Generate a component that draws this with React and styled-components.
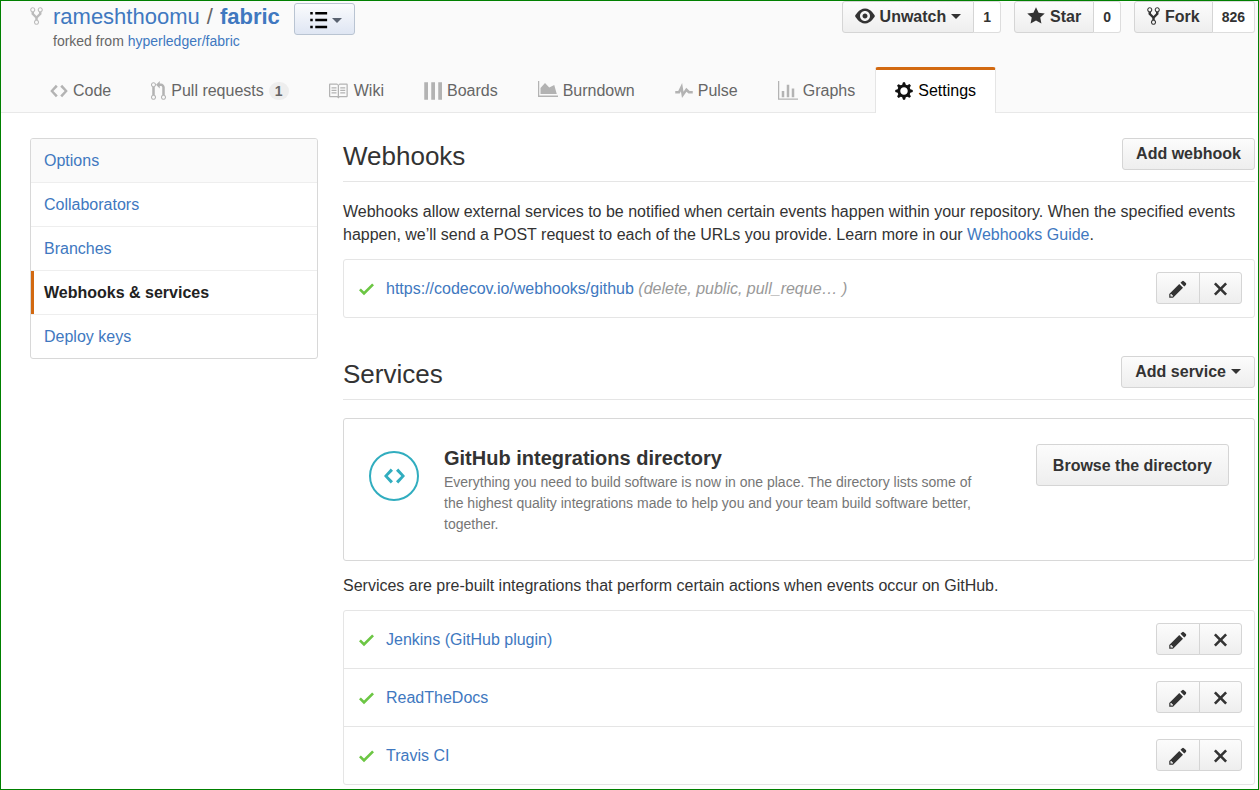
import React from "react";
import styled, { createGlobalStyle, css } from "styled-components";

const GlobalStyle = createGlobalStyle`
  *, *::before, *::after { box-sizing: border-box; }
  body {
    margin: 0;
    background: #fff;
    color: #333;
    font: 16px/23px "Liberation Sans", Arial, sans-serif;
  }
  h1, h2, h3, p, ul { margin: 0; padding: 0; }
  ul { list-style: none; }
  svg { display: block; flex: none; }
`;

const icons = {
  fork: {
    width: 10,
    d: "M8 1a1.993 1.993 0 0 0-1 3.72V6L5 8 3 6V4.72A1.993 1.993 0 0 0 2 1a1.993 1.993 0 0 0-1 3.72V6.5l3 3v1.78A1.993 1.993 0 0 0 5 15a1.993 1.993 0 0 0 1-3.72V9.5l3-3V4.72A1.993 1.993 0 0 0 8 1zM2 4.2C1.34 4.2.8 3.65.8 3c0-.65.55-1.2 1.2-1.2.65 0 1.2.55 1.2 1.2 0 .65-.55 1.2-1.2 1.2zm3 10c-.66 0-1.2-.55-1.2-1.2 0-.65.55-1.2 1.2-1.2.65 0 1.2.55 1.2 1.2 0 .65-.55 1.2-1.2 1.2zm3-10c-.66 0-1.2-.55-1.2-1.2 0-.65.55-1.2 1.2-1.2.65 0 1.2.55 1.2 1.2 0 .65-.55 1.2-1.2 1.2z",
  },
  eye: {
    width: 16,
    d: "M8.06 2C3 2 0 8 0 8s3 6 8.06 6C13 14 16 8 16 8s-3-6-7.94-6zM8 12c-2.2 0-4-1.78-4-4 0-2.2 1.8-4 4-4 2.22 0 4 1.8 4 4 0 2.22-1.78 4-4 4zm2-4c0 1.11-.89 2-2 2-1.11 0-2-.89-2-2 0-1.11.89-2 2-2 1.11 0 2 .89 2 2z",
  },
  star: {
    width: 14,
    d: "M14 6l-4.9-.64L7 1 4.9 5.36 0 6l3.6 3.26L2.67 14 7 11.67 11.33 14l-.93-4.74z",
  },
  code: {
    width: 14,
    d: "M9.5 3L8 4.5 11.5 8 8 11.5 9.5 13 14 8 9.5 3zm-5 0L0 8l4.5 5L6 11.5 2.5 8 6 4.5 4.5 3z",
  },
  pull: {
    width: 12,
    d: "M11 11.28V5c-.03-.78-.34-1.47-.94-2.06C9.46 2.35 8.78 2.03 8 2H7V0L4 3l3 3V4h1c.27.02.48.11.69.31.21.2.3.42.31.69v6.28A1.993 1.993 0 0 0 10 15a1.993 1.993 0 0 0 1-3.72zm-1 2.92c-.66 0-1.2-.55-1.2-1.2 0-.65.55-1.2 1.2-1.2.65 0 1.2.55 1.2 1.2 0 .65-.55 1.2-1.2 1.2zM4 3c0-1.11-.89-2-2-2a1.993 1.993 0 0 0-1 3.72v6.56A1.993 1.993 0 0 0 2 15a1.993 1.993 0 0 0 1-3.72V4.72c.59-.34 1-.98 1-1.72zm-.8 10c0 .66-.55 1.2-1.2 1.2-.65 0-1.2-.55-1.2-1.2 0-.65.55-1.2 1.2-1.2.65 0 1.2.55 1.2 1.2zM2 4.2C1.34 4.2.8 3.65.8 3c0-.65.55-1.2 1.2-1.2.65 0 1.2.55 1.2 1.2 0 .65-.55 1.2-1.2 1.2z",
  },
  book: {
    width: 16,
    d: "M2 5h4v1H2V5zm0 3h4V7H2v1zm0 2h4V9H2v1zm11-5H9v1h4V5zm0 2H9v1h4V7zm0 2H9v1h4V9zm2-6v9c0 .55-.45 1-1 1H8.5l-1 1-1-1H1c-.55 0-1-.45-1-1V3c0-.55.45-1 1-1h5.500l1 1 1-1H14c.55 0 1 .45 1 1zm-8 .5L6.500 3H1v9h6V3.5zm7-.5H8.500l-.5.5V12h6V3z",
  },
  boards: { width: 14, d: "M0 1h3v14H0zM5.600 1h3v14h-3zM11.200 1h3v14h-3z" },
  burndown: {
    width: 16,
    d: "M0 0h1v11.600h15v1.200H0zM2 10.400V5.500L5.600 1.500 9 5.200 13 3.200 15 10.400z",
  },
  pulse: {
    width: 14,
    d: "M11.5 8L8.8 5.4 6.6 8.5 5.5 1.6 2.38 8H0v2h3.6l.9-1.8.9 5.4L9 8.500l1.6 1.5H14V8z",
  },
  graph: { width: 16, d: "M16 14v1H0V0h1v14h15zM5 13H3V8h2v5zm4 0H7V3h2v10zm4 0h-2V6h2v7z" },
  gear: {
    width: 14,
    d: "M14 8.77v-1.6l-1.94-.64-.45-1.09.88-1.84-1.13-1.13-1.81.91-1.09-.45-.69-1.92h-1.6l-.63 1.94-1.11.45-1.84-.88-1.13 1.13.91 1.81-.45 1.09L0 7.23v1.59l1.94.64.45 1.09-.88 1.84 1.13 1.13 1.81-.91 1.09.45.69 1.92h1.59l.63-1.94 1.11-.45 1.84.88 1.13-1.13-.92-1.81.47-1.09L14 8.75v.02zM7 11c-1.66 0-3-1.34-3-3s1.34-3 3-3 3 1.34 3 3-1.34 3-3 3z",
  },
  check: { width: 12, d: "M12 5l-8 8-4-4 1.5-1.5L4 10l6.5-6.5z" },
  pencil: {
    width: 14,
    d: "M0 12v3h3l8-8-3-3-8 8zm3 2H1v-2h1v1h1v1zm10.3-9.3L12 6 9 3l1.3-1.3a.996.996 0 0 1 1.41 0l1.59 1.59c.39.39.39 1.02 0 1.41z",
  },
  remove: {
    width: 12,
    d: "M7.48 8l3.75 3.75-1.48 1.48L6 9.48l-3.75 3.75-1.48-1.48L4.52 8 .77 4.25l1.48-1.48L6 6.52l3.75-3.75 1.48 1.48z",
  },
  list: {
    width: 14,
    d: "M0 1.500h2v2H0zM4 1.500h9.500v2H4zM0 7h2v2H0zM4 7h9.500v2H4zM0 12.500h2v2H0zM4 12.500h9.500v2H4z",
  },
};

function Icon({ name, size = 20 }) {
  const { width, d } = icons[name];
  return (
    <svg
      width={Math.round((width * size) / 16)}
      height={size}
      viewBox={`0 0 ${width} 16`}
      fill="currentColor"
      fillRule="evenodd"
      aria-hidden="true"
    >
      <path d={d} />
    </svg>
  );
}

const Frame = styled.div`
  min-height: 100vh;
  border: 1px solid #008000;
`;

const Link = styled.a`
  color: #4078c0;
  text-decoration: none;
`;

const Caret = styled.span`
  flex: none;
  border: 5px solid transparent;
  border-top-color: currentColor;
  border-bottom: 0;
`;

const Button = styled.button`
  display: inline-flex;
  align-items: center;
  justify-content: center;
  gap: 5px;
  flex: none;
  min-height: ${(p) => (p.$large ? "42px" : "32px")};
  padding: ${(p) => (p.$large ? "0 16px" : "0 13px 2px")};
  border: 1px solid #d5d5d5;
  border-radius: 3px;
  background: linear-gradient(#fcfcfc, #eee);
  color: #333;
  font: bold 16px/23px "Liberation Sans", Arial, sans-serif;
  white-space: nowrap;
  cursor: pointer;
`;

/* Header */

const Header = styled.header`
  padding: 0 3px 0 29px;
  border-bottom: 1px solid #e8e8e8;
  background: #fafafa;
`;

const HeaderTop = styled.div`
  display: flex;
  justify-content: space-between;
  align-items: flex-start;
  gap: 20px;
`;

const Title = styled.div`
  display: flex;
  align-items: flex-start;
  gap: 10px;
  padding-top: 2px;
`;

const TitleIcon = styled.span`
  padding-top: 3px;
  color: #bbb;
`;

const RepoName = styled.h1`
  display: flex;
  gap: 7px;
  color: #666;
  font-size: 22px;
  font-weight: normal;
  line-height: 28px;
`;

const RepoLink = styled(Link)`
  font-weight: bold;
`;

const ForkNote = styled.p`
  color: #666;
  font-size: 14px;
  line-height: 20px;
`;

const ListButton = styled(Button)`
  gap: 4px;
  margin-left: 4px;
  padding: 2px 12px 0 15px;
  border-color: #b9c4d2;
  background: linear-gradient(#fafbfd, #dfe6f3);
  color: #000;

  ${Caret} { color: #596270; }
`;

const Social = styled.ul`
  display: flex;
  gap: 13px;
`;

const SocialItem = styled.li`
  display: flex;
`;

const SocialButton = styled(Button)`
  padding: 0 12px 2px;
  border-radius: 3px 0 0 3px;
`;

const Count = styled.a`
  display: flex;
  align-items: center;
  padding: 0 9px;
  border: 1px solid #ddd;
  border-left: 0;
  border-radius: 0 3px 3px 0;
  background: #fff;
  color: #333;
  font-size: 14px;
  font-weight: bold;
  text-decoration: none;
`;

const Tabs = styled.nav`
  display: flex;
  margin-top: 16px;
`;

const Tab = styled.a`
  display: flex;
  align-items: center;
  gap: 5px;
  height: 46px;
  margin-bottom: -1px;
  padding: 0 19px 2px;
  border: solid transparent;
  border-width: 3px 1px 0;
  border-radius: 3px 3px 0 0;
  color: #666;
  text-decoration: none;
  white-space: nowrap;

  svg { color: #b3b3b3; }

  ${(p) =>
    p.$active &&
    css`
      border-color: #d26911 #e5e5e5 transparent;
      background: #fff;
      color: #000;

      svg { color: #111; }
    `}
`;

const Badge = styled.span`
  min-width: 20px;
  border-radius: 10px;
  background: #eee;
  color: #666;
  font-size: 14px;
  font-weight: bold;
  line-height: 18px;
  text-align: center;
`;

/* Page body */

const Page = styled.div`
  display: flex;
  align-items: flex-start;
  gap: 25px;
  padding: 25px 3px 3px 29px;
`;

const Menu = styled.nav`
  flex: 0 0 288px;
  border: 1px solid #d8d8d8;
  border-radius: 3px;
  overflow: hidden;
`;

const MenuItem = styled(Link)`
  display: block;
  padding: 10px 13px;
  border-bottom: 1px solid #eee;

  &:first-child { background: #fafafa; }
  &:last-child { border-bottom: 0; }

  ${(p) =>
    p.$active &&
    css`
      box-shadow: inset 3px 0 #d26911;
      color: #222;
      font-weight: bold;
    `}
`;

const Main = styled.main`
  flex: 1;
  min-width: 0;
`;

const Section = styled.section`
  & + & { margin-top: 38px; }
`;

const SectionHead = styled.div`
  display: flex;
  justify-content: space-between;
  align-items: flex-start;
  margin-bottom: 18px;
  padding-bottom: 11px;
  border-bottom: 1px solid #e5e5e5;
`;

const SectionTitle = styled.h2`
  font-size: 26px;
  font-weight: normal;
  line-height: 36px;
  margin-bottom: -4px;
`;

const Text = styled.p`
  margin-bottom: 13px;
`;

const HookList = styled.ul`
  border: 1px solid #e5e5e5;
  border-radius: 3px;
`;

const HookRow = styled.li`
  display: flex;
  align-items: center;
  gap: 12px;
  padding: 12px 12px 13px 15px;

  & + & { border-top: 1px solid #e5e5e5; }
`;

const Status = styled.span`
  padding-top: 2px;
  color: #6cc644;
`;

const HookName = styled.span`
  flex: 1;
  min-width: 0;
`;

const Events = styled.em`
  color: #999;
`;

const ButtonGroup = styled.div`
  display: flex;
`;

const EditButton = styled(Button)`
  padding: 2px 12px 0;
  border-radius: 3px 0 0 3px;
`;

const DeleteButton = styled(Button)`
  margin-left: -1px;
  padding: 2px 13px 0;
  border-radius: 0 3px 3px 0;
`;

const Directory = styled.div`
  display: flex;
  align-items: flex-start;
  gap: 25px;
  margin-bottom: 13px;
  padding: 25px;
  border: 1px solid #d8d8d8;
  border-radius: 3px;
`;

const DirectoryIcon = styled.span`
  display: flex;
  align-items: center;
  justify-content: center;
  flex: none;
  width: 50px;
  height: 50px;
  margin-top: 7px;
  border: 2px solid #31adbf;
  border-radius: 50%;
  color: #31adbf;
`;

const DirectoryBody = styled.div`
  flex: 1;
`;

const DirectoryTitle = styled.h3`
  font-size: 20px;
  line-height: 28px;
`;

const DirectoryText = styled.p`
  max-width: 546px;
  color: #767676;
  font-size: 14px;
  line-height: 21px;
`;

const socialItems = [
  { icon: "eye", label: "Unwatch", count: "1", caret: true },
  { icon: "star", label: "Star", count: "0" },
  { icon: "fork", label: "Fork", count: "826" },
];

const tabs = [
  { icon: "code", label: "Code" },
  { icon: "pull", label: "Pull requests", badge: "1" },
  { icon: "book", label: "Wiki" },
  { icon: "boards", label: "Boards" },
  { icon: "burndown", label: "Burndown" },
  { icon: "pulse", label: "Pulse" },
  { icon: "graph", label: "Graphs" },
  { icon: "gear", label: "Settings", active: true },
];

const menu = ["Options", "Collaborators", "Branches", "Webhooks & services", "Deploy keys"];

const services = ["Jenkins (GitHub plugin)", "ReadTheDocs", "Travis CI"];

function Hook({ name, events }) {
  return (
    <HookRow>
      <Status>
        <Icon name="check" />
      </Status>
      <HookName>
        <Link href="#">{name}</Link> {events && <Events>{events}</Events>}
      </HookName>
      <ButtonGroup>
        <EditButton type="button" aria-label={`Edit ${name}`}>
          <Icon name="pencil" />
        </EditButton>
        <DeleteButton type="button" aria-label={`Delete ${name}`}>
          <Icon name="remove" />
        </DeleteButton>
      </ButtonGroup>
    </HookRow>
  );
}

export default function App() {
  return (
    <Frame>
      <GlobalStyle />
      <Header>
        <HeaderTop>
          <Title>
            <TitleIcon>
              <Icon name="fork" />
            </TitleIcon>
            <div>
              <RepoName>
                <Link href="#">rameshthoomu</Link>
                <span>/</span>
                <RepoLink href="#">fabric</RepoLink>
              </RepoName>
              <ForkNote>
                forked from <Link href="#">hyperledger/fabric</Link>
              </ForkNote>
            </div>
            <ListButton type="button" aria-label="Lists">
              <Icon name="list" />
              <Caret />
            </ListButton>
          </Title>
          <Social>
            {socialItems.map((item) => (
              <SocialItem key={item.label}>
                <SocialButton type="button">
                  <Icon name={item.icon} />
                  {item.label}
                  {item.caret && <Caret />}
                </SocialButton>
                <Count href="#">{item.count}</Count>
              </SocialItem>
            ))}
          </Social>
        </HeaderTop>
        <Tabs>
          {tabs.map((tab) => (
            <Tab key={tab.label} href="#" $active={tab.active}>
              <Icon name={tab.icon} />
              {tab.label}
              {tab.badge && <Badge>{tab.badge}</Badge>}
            </Tab>
          ))}
        </Tabs>
      </Header>
      <Page>
        <Menu>
          {menu.map((label) => (
            <MenuItem key={label} href="#" $active={label === "Webhooks & services"}>
              {label}
            </MenuItem>
          ))}
        </Menu>
        <Main>
          <Section>
            <SectionHead>
              <SectionTitle>Webhooks</SectionTitle>
              <Button type="button">Add webhook</Button>
            </SectionHead>
            <Text>
              Webhooks allow external services to be notified when certain events happen within your
              repository. When the specified events happen, we’ll send a POST request to each of the
              URLs you provide. Learn more in our <Link href="#">Webhooks Guide</Link>.
            </Text>
            <HookList>
              <Hook
                name="https://codecov.io/webhooks/github"
                events="(delete, public, pull_reque… )"
              />
            </HookList>
          </Section>
          <Section>
            <SectionHead>
              <SectionTitle>Services</SectionTitle>
              <Button type="button">
                Add service
                <Caret />
              </Button>
            </SectionHead>
            <Directory>
              <DirectoryIcon>
                <Icon name="code" size={24} />
              </DirectoryIcon>
              <DirectoryBody>
                <DirectoryTitle>GitHub integrations directory</DirectoryTitle>
                <DirectoryText>
                  Everything you need to build software is now in one place. The directory lists
                  some of the highest quality integrations made to help you and your team build
                  software better, together.
                </DirectoryText>
              </DirectoryBody>
              <Button type="button" $large>
                Browse the directory
              </Button>
            </Directory>
            <Text>
              Services are pre-built integrations that perform certain actions when events occur on
              GitHub.
            </Text>
            <HookList>
              {services.map((name) => (
                <Hook key={name} name={name} />
              ))}
            </HookList>
          </Section>
        </Main>
      </Page>
    </Frame>
  );
}
